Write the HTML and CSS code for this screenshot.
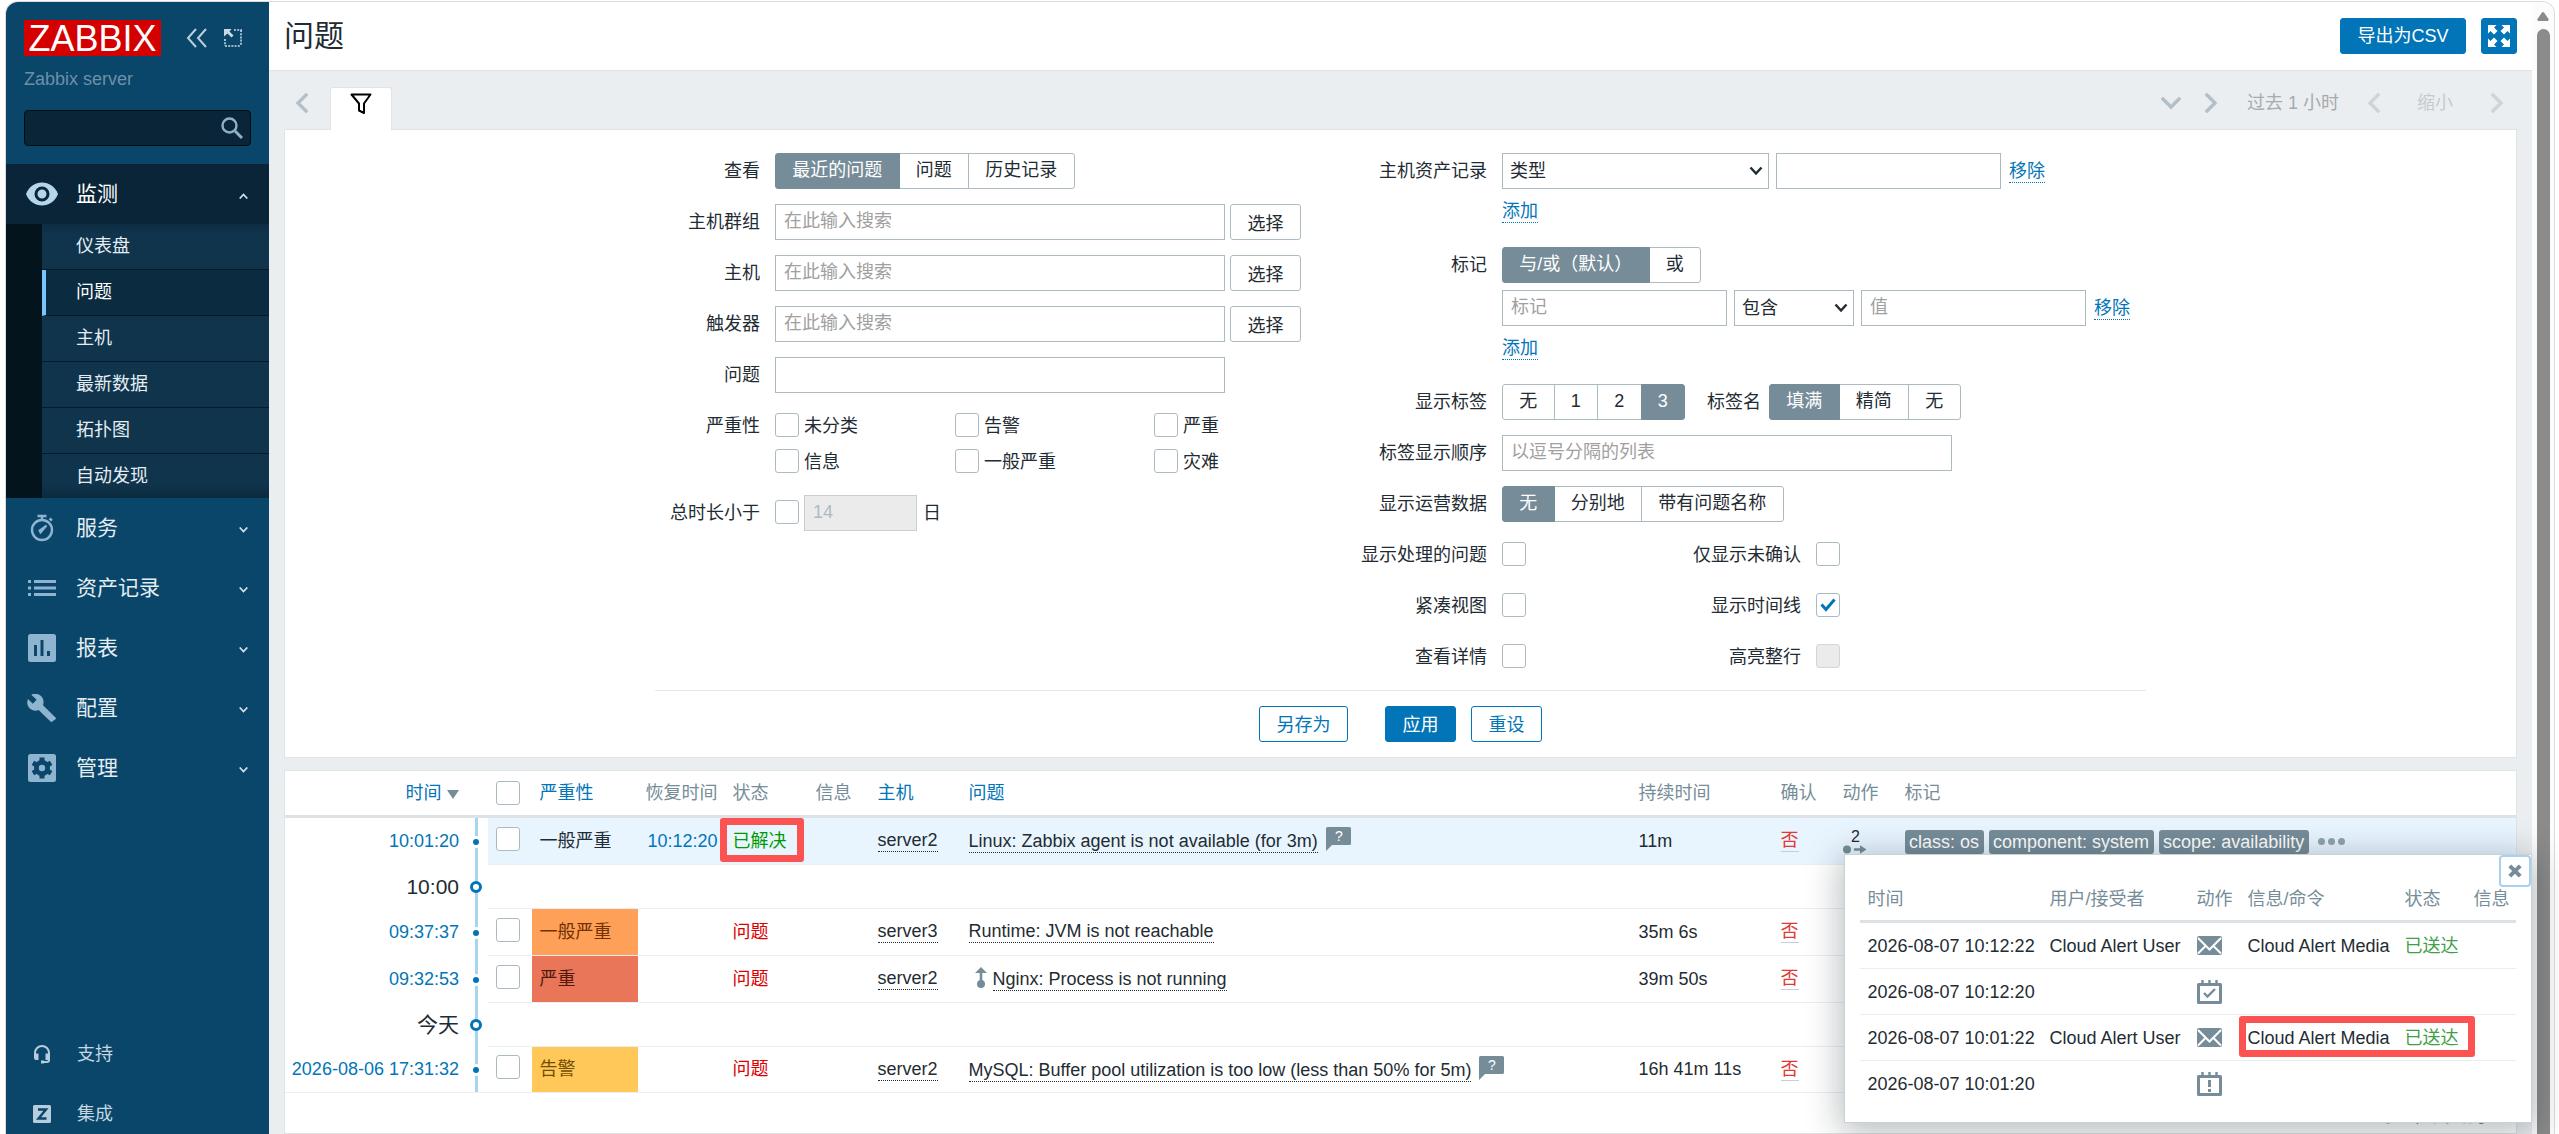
FILE: index.html
```html
<!DOCTYPE html>
<html lang="zh-CN">
<head>
    <meta charset="UTF-8">
    <meta name="viewport" content="width=device-width, initial-scale=1.0">
    <title>Zabbix server: 问题</title>
    <link rel="stylesheet" href="styles.css">
</head>
<body>
<div class="wrapper">
    <aside class="sidebar">
        <div class="sidebar-header">
            <a class="logo">ZABBIX</a>
            <svg class="icon-collapse" width="22" height="20" viewBox="0 0 22 20" fill="none" stroke="#b9cfdd" stroke-width="2"><path d="M10 1L2 10l8 9M20 1l-8 9 8 9"/></svg>
            <svg width="18" height="18" viewBox="0 0 18 18" fill="none" stroke="#c8d9e4"><path d="M10 1h8M17 1v16M1 17h16M1 10v7" stroke-width="1.6" stroke-dasharray="2 1.2"/><path d="M0 0h7.500L5.500 2.500l4 4-2 2-4-4L0 7.500z" fill="#c8d9e4" stroke="none"/></svg>
        </div>
        <div class="server-name">Zabbix server</div>
        <div class="search">
            <svg width="22" height="22" viewBox="0 0 22 22" fill="none" stroke="#8fb0c6"><circle cx="8.500" cy="8.500" r="7" stroke-width="2.400"/><path d="M14 14l7 7" stroke-width="3"/></svg>
        </div>
        <nav>
            <div class="menu-item open">
                <svg width="34" height="24" viewBox="0 0 34 24"><path d="M1 12C4 4.500 10 .5 17 .5S30 4.500 33 12c-3 7.500-9 11.500-16 11.500S4 19.500 1 12z" fill="#b5d5ea"/><circle cx="17" cy="12" r="6" fill="#b5d5ea" stroke="#0a2537" stroke-width="3"/></svg>
                <span>监测</span>
                <svg class="arrow" width="9" height="6" viewBox="0 0 9 6"><path d="M.7 5.500l3.800-4 3.800 4"/></svg>
            </div>
            <ul class="submenu">
                <li>仪表盘</li>
                <li class="selected">问题</li>
                <li>主机</li>
                <li>最新数据</li>
                <li>拓扑图</li>
                <li>自动发现</li>
            </ul>
            <div class="menu-item">
                <svg width="34" height="28" viewBox="0 0 34 28" fill="none" stroke="#8fb4cf"><circle cx="17" cy="16" r="10" stroke-width="2.400"/><path d="M12.500 2h9M17 2v4M24.500 4.500l2.500 2" stroke-width="2.400"/><path d="M15.500 18.500l6-7-7 5z" fill="#8fb4cf" stroke-width="2"/></svg>
                <span>服务</span>
                <svg class="arrow" width="9" height="6" viewBox="0 0 9 6"><path d="M.7.5l3.800 4 3.800-4"/></svg>
            </div>
            <div class="menu-item">
                <svg width="34" height="18" viewBox="0 0 34 18" fill="#8fb4cf"><path d="M3 1h3v3H3zM3 7.500h3v3H3zM3 14h3v3H3zM9 1h22v3H9zM9 7.500h22v3H9zM9 14h22v3H9z"/></svg>
                <span>资产记录</span>
                <svg class="arrow" width="9" height="6" viewBox="0 0 9 6"><path d="M.7.5l3.800 4 3.800-4"/></svg>
            </div>
            <div class="menu-item">
                <svg width="34" height="28" viewBox="0 0 34 28"><rect x="3" y="0" width="28" height="28" rx="2.500" fill="#8fb4cf"/><path d="M9 11h3v11H9zM15.500 6h3v16h-3zM22 17h3v5h-3z" fill="#0a466a"/></svg>
                <span>报表</span>
                <svg class="arrow" width="9" height="6" viewBox="0 0 9 6"><path d="M.7.5l3.800 4 3.800-4"/></svg>
            </div>
            <div class="menu-item">
                <svg width="34" height="28" viewBox="0 0 34 28"><path d="M30.500 23.500L18 11.200C19.200 8 18.500 4.500 16 2.100 13.300-.5 9.400-1 6.300.7l5.300 5.100-3.800 3.900L3 4.900C1.800 7.600 1.800 11.500 4.500 14.200c2.500 2.400 6 3.100 9.100 1.900l11.900 11.500c.5.500 1.300.5 1.800 0l3.200-2.400c.6-.5.6-1.300 0-1.700z" fill="#8fb4cf"/></svg>
                <span>配置</span>
                <svg class="arrow" width="9" height="6" viewBox="0 0 9 6"><path d="M.7.5l3.800 4 3.800-4"/></svg>
            </div>
            <div class="menu-item">
                <svg width="34" height="28" viewBox="0 0 34 28"><rect x="3" y="0" width="28" height="28" rx="2.500" fill="#8fb4cf"/><circle cx="17" cy="14" r="8" fill="#0a466a"/><path d="M17 3.500v21M7.900 8.800l18.200 10.400M7.900 19.200L26.100 8.800" stroke="#0a466a" stroke-width="5"/><circle cx="17" cy="14" r="3.200" fill="#8fb4cf"/></svg>
                <span>管理</span>
                <svg class="arrow" width="9" height="6" viewBox="0 0 9 6"><path d="M.7.5l3.800 4 3.800-4"/></svg>
            </div>
        </nav>
        <div class="sidebar-footer">
            <div class="menu-item">
                <svg width="34" height="20" viewBox="0 0 34 20"><path d="M10 12V9a7 7 0 0 1 14 0v7q0 2-2 2h-4" fill="none" stroke="#b5cddc" stroke-width="2"/><path d="M9 9.500h4.500v6.500H11q-2 0-2-2zM20.500 9.500H25v4.500q0 2-2 2h-2.500zM16 16.500h3v3h-3z" fill="#b5cddc"/></svg>
                <span>支持</span>
            </div>
            <div class="menu-item">
                <svg width="34" height="18" viewBox="0 0 34 18"><rect x="8" width="18" height="18" rx="1.500" fill="#b5cddc"/><path d="M13 4.500h8L13.500 13.500H21.500" fill="none" stroke="#0a466a" stroke-width="2.400"/></svg>
                <span>集成</span>
            </div>
        </div>
    </aside>

    <main>
        <header>
            <h1>问题</h1>
            <button class="btn">导出为CSV</button>
            <button class="btn btn-kiosk">
                <svg width="22" height="22" viewBox="0 0 22 22" fill="#fff"><path id="corner" d="M0 0h8.500L6 2.500l3.500 3.500L6 9.500l-3.500-3.500L0 8.500z"/><use href="#corner" transform="matrix(-1 0 0 1 22 0)"/><use href="#corner" transform="matrix(1 0 0 -1 0 22)"/><use href="#corner" transform="matrix(-1 0 0 -1 22 22)"/></svg>
            </button>
        </header>

        <div class="tabs-nav">
            <svg class="nav-prev" width="13" height="20" viewBox="0 0 13 20"><path d="M11 2L3 10l8 8"/></svg>
            <div class="tab">
                <svg width="22" height="22" viewBox="0 0 22 22" fill="none" stroke="#000" stroke-width="2"><path d="M1.500 1.500h19l-6.500 9v9.500l-5-2.500v-7z" stroke-linejoin="round"/></svg>
            </div>
            <div class="time-nav">
                <svg width="20" height="13" viewBox="0 0 20 13"><path d="M2 2l8 8 8-8"/></svg>
                <svg class="next" width="13" height="20" viewBox="0 0 13 20"><path d="M2 2l8 8-8 8"/></svg>
                <span class="range">过去 1 小时</span>
                <svg class="disabled" width="13" height="20" viewBox="0 0 13 20"><path d="M11 2l-8 8 8 8"/></svg>
                <span class="zoom-out">缩小</span>
                <svg class="disabled" width="13" height="20" viewBox="0 0 13 20"><path d="M2 2l8 8-8 8"/></svg>
            </div>
        </div>

        <section class="filter">
            <div class="filter-form">
                <div class="form-col form-left">
                    <div class="row">
                        <label>查看</label>
                        <div class="radio"><span class="on">最近的问题</span><span>问题</span><span>历史记录</span></div>
                    </div>
                    <div class="row">
                        <label>主机群组</label>
                        <div class="input w450">在此输入搜索</div>
                        <button class="btn-grey">选择</button>
                    </div>
                    <div class="row">
                        <label>主机</label>
                        <div class="input w450">在此输入搜索</div>
                        <button class="btn-grey">选择</button>
                    </div>
                    <div class="row">
                        <label>触发器</label>
                        <div class="input w450">在此输入搜索</div>
                        <button class="btn-grey">选择</button>
                    </div>
                    <div class="row">
                        <label>问题</label>
                        <div class="input w450"></div>
                    </div>
                    <div class="row top">
                        <label>严重性</label>
                        <div class="severities">
                            <span class="check"><i class="cb"></i>未分类</span>
                            <span class="check"><i class="cb"></i>告警</span>
                            <span class="check"><i class="cb"></i>严重</span>
                            <span class="check"><i class="cb"></i>信息</span>
                            <span class="check"><i class="cb"></i>一般严重</span>
                            <span class="check"><i class="cb"></i>灾难</span>
                        </div>
                    </div>
                    <div class="row">
                        <label>总时长小于</label>
                        <i class="cb"></i>
                        <div class="input age">14</div>
                        <span>日</span>
                    </div>
                </div>

                <div class="form-col form-right">
                    <div class="row">
                        <label>主机资产记录</label>
                        <div class="select w267">类型<svg width="14" height="10" viewBox="0 0 14 10"><path d="M1.500 1.500L7 7.500l5.500-6"/></svg></div>
                        <div class="input w225"></div>
                        <a class="link">移除</a>
                    </div>
                    <div class="row add"><label></label><a class="link">添加</a></div>
                    <div class="row">
                        <label>标记</label>
                        <div class="radio"><span class="on">与/或（默认）</span><span>或</span></div>
                    </div>
                    <div class="row tags-row">
                        <label></label>
                        <div class="input w225">标记</div>
                        <div class="select w120">包含<svg width="14" height="10" viewBox="0 0 14 10"><path d="M1.500 1.500L7 7.500l5.500-6"/></svg></div>
                        <div class="input w225">值</div>
                        <a class="link">移除</a>
                    </div>
                    <div class="row add"><label></label><a class="link">添加</a></div>
                    <div class="row">
                        <label>显示标签</label>
                        <div class="radio"><span>无</span><span>1</span><span>2</span><span class="on">3</span></div>
                        <span class="tag-name">标签名</span>
                        <div class="radio"><span class="on">填满</span><span>精简</span><span>无</span></div>
                    </div>
                    <div class="row">
                        <label>标签显示顺序</label>
                        <div class="input w450">以逗号分隔的列表</div>
                    </div>
                    <div class="row">
                        <label>显示运营数据</label>
                        <div class="radio"><span class="on">无</span><span>分别地</span><span>带有问题名称</span></div>
                    </div>
                    <div class="row">
                        <label>显示处理的问题</label><i class="cb"></i>
                        <span class="label2">仅显示未确认</span><i class="cb"></i>
                    </div>
                    <div class="row">
                        <label>紧凑视图</label><i class="cb"></i>
                        <span class="label2">显示时间线</span><i class="cb"><svg width="16" height="14" viewBox="0 0 16 14" fill="none" stroke="#0275b8" stroke-width="3"><path d="M1.500 6.500l4.500 5L14.500 1.500"/></svg></i>
                    </div>
                    <div class="row">
                        <label>查看详情</label><i class="cb"></i>
                        <span class="label2">高亮整行</span><i class="cb off"></i>
                    </div>
                </div>
            </div>
            <div class="filter-buttons">
                <button class="btn btn-alt save">另存为</button>
                <button class="btn">应用</button>
                <button class="btn btn-alt">重设</button>
            </div>
        </section>

        <section class="results">
            <table class="list">
                <colgroup>
                    <col class="c-time"><col class="c-line"><col class="c-check"><col class="c-sev"><col class="c-rec"><col class="c-status"><col class="c-info"><col class="c-host"><col class="c-problem"><col class="c-dur"><col class="c-ack"><col class="c-act"><col>
                </colgroup>
                <thead>
                    <tr>
                        <th class="right"><a>时间</a><b class="sort"></b></th>
                        <th></th>
                        <th><i class="cb"></i></th>
                        <th><a>严重性</a></th>
                        <th class="right">恢复时间</th>
                        <th>状态</th>
                        <th>信息</th>
                        <th><a>主机</a></th>
                        <th><a>问题</a></th>
                        <th>持续时间</th>
                        <th>确认</th>
                        <th>动作</th>
                        <th>标记</th>
                    </tr>
                </thead>
                <tbody>
                    <tr class="hl">
                        <td class="time">10:01:20</td>
                        <td class="line"><i class="dot"></i></td>
                        <td><i class="cb"></i></td>
                        <td>一般严重</td>
                        <td class="blue right">10:12:20</td>
                        <td class="green marked">已解决</td>
                        <td></td>
                        <td><a class="dotted">server2</a></td>
                        <td><a class="dotted low">Linux: Zabbix agent is not available (for 3m)</a><svg class="hint" width="25" height="24" viewBox="0 0 25 24"><path d="M1.500 0h22q1.500 0 1.500 1.500v15q0 1.500-1.500 1.500H6l-6 6V1.500Q0 0 1.500 0z" fill="#768d99"/><text x="13" y="14" text-anchor="middle">?</text></svg></td>
                        <td>11m</td>
                        <td><a class="ack">否</a></td>
                        <td><div class="actions"><span>2</span><svg width="24" height="9" viewBox="0 0 24 9" fill="#768d99"><circle cx="4" cy="4.500" r="4"/><path d="M11 3.200h6V.3l6.500 4.200L17 8.700V5.800h-6z"/></svg></div></td>
                        <td><div class="tags"><span>class: os</span><span>component: system</span><span>scope: availability</span><b></b><b></b><b></b></div></td>
                    </tr>
                    <tr class="group">
                        <td class="time">10:00</td>
                        <td class="line"><i class="ring"></i></td>
                        <td colspan="11"></td>
                    </tr>
                    <tr>
                        <td class="time">09:37:37</td>
                        <td class="line"><i class="dot"></i></td>
                        <td><i class="cb"></i></td>
                        <td class="average">一般严重</td>
                        <td></td>
                        <td class="red">问题</td>
                        <td></td>
                        <td><a class="dotted">server3</a></td>
                        <td><a class="dotted">Runtime: JVM is not reachable</a></td>
                        <td>35m 6s</td>
                        <td><a class="ack">否</a></td>
                        <td></td>
                        <td></td>
                    </tr>
                    <tr>
                        <td class="time">09:32:53</td>
                        <td class="line"><i class="dot"></i></td>
                        <td><i class="cb"></i></td>
                        <td class="high">严重</td>
                        <td></td>
                        <td class="red">问题</td>
                        <td></td>
                        <td><a class="dotted">server2</a></td>
                        <td><svg class="depend" width="12" height="21" viewBox="0 0 12 21" fill="#768d99"><path d="M6 0l6 6H7.300v8H4.700V6H0z"/><circle cx="6" cy="17" r="4"/></svg><a class="dotted low">Nginx: Process is not running</a></td>
                        <td>39m 50s</td>
                        <td><a class="ack">否</a></td>
                        <td></td>
                        <td></td>
                    </tr>
                    <tr class="group">
                        <td class="time">今天</td>
                        <td class="line"><i class="ring"></i></td>
                        <td colspan="11"></td>
                    </tr>
                    <tr class="last">
                        <td class="time">2026-08-06 17:31:32</td>
                        <td class="line"><i class="dot"></i></td>
                        <td><i class="cb"></i></td>
                        <td class="warning">告警</td>
                        <td></td>
                        <td class="red">问题</td>
                        <td></td>
                        <td><a class="dotted">server2</a></td>
                        <td><a class="dotted low">MySQL: Buffer pool utilization is too low (less than 50% for 5m)</a><svg class="hint" width="25" height="24" viewBox="0 0 25 24"><path d="M1.500 0h22q1.500 0 1.500 1.500v15q0 1.500-1.500 1.500H6l-6 6V1.500Q0 0 1.500 0z" fill="#768d99"/><text x="13" y="14" text-anchor="middle">?</text></svg></td>
                        <td>16h 41m 11s</td>
                        <td><a class="ack">否</a></td>
                        <td></td>
                        <td></td>
                    </tr>
                </tbody>
            </table>
            <div class="table-stats">显示 4，找到的 4</div>
        </section>
    </main>

    <div class="scrollbar">
        <svg width="12" height="9" viewBox="0 0 12 9"><path d="M6 0q.8 0 1.400.9L11.500 7q.6 1.500-1 2h-9Q-.1 8.500.5 7L4.600.9Q5.200 0 6 0z" fill="#8b8b8b"/></svg>
        <div class="thumb"></div>
    </div>
</div>

<!-- action log popup -->
<div class="popup">
    <button class="close"><svg width="14" height="14" viewBox="0 0 14 14" stroke="#768d99" stroke-width="4"><path d="M1.800 1.800l10.400 10.400M12.200 1.800L1.800 12.200"/></svg></button>
    <table>
        <colgroup><col class="p-time"><col class="p-user"><col class="p-act"><col class="p-msg"><col class="p-status"><col></colgroup>
        <thead>
            <tr><th>时间</th><th>用户/接受者</th><th>动作</th><th>信息/命令</th><th>状态</th><th>信息</th></tr>
        </thead>
        <tbody>
            <tr>
                <td>2026-08-07 10:12:22</td>
                <td>Cloud Alert User</td>
                <td><svg width="25" height="19" viewBox="0 0 25 19"><rect width="25" height="19" rx="2" fill="#768d99"/><path d="M1 2l11.500 11.500L24 2M1 17.500l8-8M24 17.500l-8-8" fill="none" stroke="#fff" stroke-width="2"/></svg></td>
                <td>Cloud Alert Media</td>
                <td class="sent">已送达</td>
                <td></td>
            </tr>
            <tr>
                <td>2026-08-07 10:12:20</td>
                <td></td>
                <td><svg width="25" height="24" viewBox="0 0 25 24" fill="none" stroke="#768d99"><path d="M1.500 4.500h22v18h-22z" stroke-width="3" stroke-linejoin="round"/><path d="M5.500 0v4M12.500 0v4M19.500 0v4M7 13l3.500 3.500L18 9" stroke-width="2.400"/></svg></td>
                <td></td>
                <td></td>
                <td></td>
            </tr>
            <tr>
                <td>2026-08-07 10:01:22</td>
                <td>Cloud Alert User</td>
                <td><svg width="25" height="19" viewBox="0 0 25 19"><rect width="25" height="19" rx="2" fill="#768d99"/><path d="M1 2l11.500 11.500L24 2M1 17.500l8-8M24 17.500l-8-8" fill="none" stroke="#fff" stroke-width="2"/></svg></td>
                <td class="marked">Cloud Alert Media</td>
                <td class="sent">已送达</td>
                <td></td>
            </tr>
            <tr>
                <td>2026-08-07 10:01:20</td>
                <td></td>
                <td><svg width="25" height="24" viewBox="0 0 25 24" fill="none" stroke="#768d99"><path d="M1.500 4.500h22v18h-22z" stroke-width="3" stroke-linejoin="round"/><path d="M5.500 0v4M12.500 0v4M19.500 0v4" stroke-width="2.400"/><path d="M12.500 8v7M12.500 17v3" stroke-width="3"/></svg></td>
                <td></td>
                <td></td>
                <td></td>
            </tr>
        </tbody>
    </table>
</div>
</body>
</html>
```

FILE: styles.css
```css
*,
*::after {
    box-sizing: border-box;
}
body {
    margin: 0;
    height: 1134px;
    overflow: hidden;
    background: #fff;
    color: #1f2c33;
    font-family: "Liberation Sans", Arial, "Noto Sans CJK SC", sans-serif;
    font-size: 18px;
    line-height: 22px;
}
svg {
    display: block;
    flex: none;
}
button {
    font: inherit;
    padding: 0;
    margin: 0;
}
.wrapper {
    display: flex;
    height: 1133px;
    margin: 1px 4px 0 5px;
    border: 1px solid #dcdcdc;
    border-bottom: 0;
    border-radius: 13px 13px 0 0;
    overflow: hidden;
}

/* sidebar */
.sidebar {
    display: flex;
    flex-direction: column;
    width: 263px;
    flex: none;
    background: #0a466a;
    color: #e4edf3;
}
.sidebar-header {
    display: flex;
    align-items: center;
    height: 36px;
    margin: 18px 0 0 18px;
}
.logo {
    width: 137px;
    height: 36px;
    background: #d40000;
    color: #fff;
    font-size: 36px;
    line-height: 37px;
    text-align: center;
}
.icon-collapse {
    margin: 0 16px 0 25px;
}
.server-name {
    margin: 10px 0 0 18px;
    height: 26px;
    line-height: 26px;
    color: #6c90a7;
}
.search {
    display: flex;
    align-items: center;
    justify-content: flex-end;
    width: 227px;
    height: 36px;
    margin: 18px 0 18px 18px;
    padding-right: 7px;
    background: #0a2537;
    border: 1px solid #000d17;
    border-radius: 4px;
}
.menu-item {
    display: flex;
    align-items: center;
    height: 60px;
    padding: 0 21px 0 19px;
    font-size: 21px;
}
.menu-item span {
    flex: 1;
    margin: 0 0 1px 17px;
}
.menu-item.open {
    background: #0a2537;
    color: #fff;
}
.arrow path {
    fill: none;
    stroke: #d5e2ea;
    stroke-width: 1.7;
}
.arrow {
    margin-top: 4px;
}
.submenu {
    list-style: none;
    margin: 0;
    padding: 0;
    border-left: 36px solid #04141d;
}
.submenu li {
    height: 46px;
    line-height: 44px;
    padding-left: 34px;
    background: #0f344c;
    border-bottom: 1px solid #041b29;
}
.submenu li:first-child {
    background: linear-gradient(#0d2d42, #0f344c 10px);
}
.submenu li:last-child {
    height: 44px;
    border-bottom: 0;
    background: linear-gradient(#0f344c 30px, #0c2a3e);
}
.submenu .selected {
    padding-left: 30px;
    background: #0b2c40;
    border-left: 4px solid #79c4fb;
    color: #fff;
}
.sidebar-footer {
    margin-top: auto;
    margin-bottom: -10px;
}
.sidebar-footer .menu-item {
    font-size: 18px;
    color: #c5d7e2;
}
.sidebar-footer span {
    margin-bottom: 0;
    margin-left: 18px;
}

/* page header */
main {
    flex: 1;
    display: flex;
    flex-direction: column;
    background: #ebeef0;
}
header {
    display: flex;
    flex: none;
    align-items: center;
    height: 69px;
    padding: 0 15px 0 15px;
    background: #fff;
    border-bottom: 1px solid #dfe4e7;
}
h1 {
    flex: 1;
    margin: 0;
    font-size: 30px;
    font-weight: normal;
    line-height: 36px;
}
.btn {
    height: 36px;
    padding: 0 16.500px;
    background: #0275b8;
    border: 1px solid #0275b8;
    border-radius: 3px;
    color: #fff;
}
header .btn {
    margin-left: 15px;
}
header .btn-kiosk {
    display: flex;
    align-items: center;
    justify-content: center;
    width: 36px;
    padding: 0;
}
.btn-alt {
    background: #fff;
    color: #0275b8;
}

/* tabs and time selector */
.tabs-nav {
    display: flex;
    flex: none;
    align-items: center;
    height: 58px;
    padding: 6px 13px 0 26px;
}
.tabs-nav path {
    stroke-linecap: square;
}
.nav-prev path,
.time-nav path {
    fill: none;
    stroke: #b3c0c8;
    stroke-width: 3.4;
}
.tab {
    display: flex;
    justify-content: center;
    position: relative;
    align-self: flex-end;
    width: 62px;
    height: 43px;
    margin: 0 0 -1px 22px;
    padding-top: 5px;
    background: #fff;
    border: 1px solid #dfe4e7;
    border-bottom: 0;
    border-radius: 3px 3px 0 0;
}
.time-nav {
    display: flex;
    align-items: center;
    margin-left: auto;
    margin-right: 15px;
}
.time-nav .next {
    margin: 0 29px 0 24px;
}
.time-nav .disabled path {
    stroke: #cdd5da;
}
.range {
    width: 120px;
    color: #a5abae;
}
.zoom-out {
    margin: 0 38px 0 37px;
    color: #c2cbd0;
}

/* filter */
.filter {
    flex: none;
    height: 629px;
    margin: 0 15px 0 15px;
    padding-top: 23px;
    background: #fff;
    border: 1px solid #dfe4e7;
}
.filter-form {
    display: flex;
    width: 1491px;
    height: 538px;
    margin: 0 auto;
    border-bottom: 1px solid #e5e9eb;
}
.form-left {
    width: 685px;
}
.row {
    display: flex;
    align-items: center;
    height: 36px;
    margin-bottom: 15px;
}
.row label {
    flex: none;
    width: 105px;
    margin-right: 15px;
    text-align: right;
    white-space: nowrap;
}
.form-right label {
    width: 147px;
}
.row.top {
    height: 72px;
    align-items: flex-start;
}
.row.top label {
    line-height: 36px;
}
.row.add {
    height: 43px;
    margin: -15px 0 15px;
    padding-top: 1px;
}
.row.tags-row {
    margin-top: -8px;
}
.radio {
    display: flex;
}
.radio span {
    height: 36px;
    padding: 0 16.25px;
    margin-left: -1px;
    border: 1px solid #acbbc2;
    line-height: 32px;
    white-space: nowrap;
}
.radio span:first-child {
    margin-left: 0;
    border-radius: 3px 0 0 3px;
}
.radio span:last-child {
    border-radius: 0 3px 3px 0;
}
.radio .on {
    position: relative;
    background: #768d99;
    border-color: #768d99;
    color: #fff;
}
.input,
.select {
    height: 36px;
    padding: 0 8px;
    border: 1px solid #acbbc2;
    background: #fff;
    color: #a0a0a0;
    line-height: 32px;
}
.select {
    display: flex;
    align-items: center;
    justify-content: space-between;
    margin-right: 7px;
    padding: 0 5px 0 7px;
    color: #1f2c33;
    line-height: 36px;
}
.select path {
    fill: none;
    stroke: #1f2c33;
    stroke-width: 2.4;
}
.select + .input {
    margin-right: 8px;
}
.tags-row label + .input {
    margin-right: 7px;
}
.w450 { width: 450px; }
.w267 { width: 267px; }
.w225 { width: 225px; }
.w120 { width: 120px; }
.btn-grey {
    width: 71px;
    height: 36px;
    margin-left: 5px;
    padding-top: 3px;
    background: #fff;
    border: 1px solid #acbbc2;
    border-radius: 3px;
    color: #1f2c33;
}
.link {
    color: #0275b8;
    line-height: 22px;
    border-bottom: 1px dotted #0275b8;
}
.cb {
    display: flex;
    align-items: center;
    justify-content: center;
    flex: none;
    width: 24px;
    height: 24px;
    background: #fff;
    border: 1px solid #acbbc2;
    border-radius: 3px;
}
.row .cb {
    margin-bottom: 3px;
}
.cb.off {
    background: #ebebeb;
    border-color: #d0d8dc;
}
.severities {
    display: grid;
    grid-template-columns: 180px 199px auto;
    grid-auto-rows: 36px;
}
.check {
    display: flex;
    align-items: center;
}
.check .cb {
    margin-right: 5px;
}
.age {
    width: 113px;
    margin: 0 6px 0 5px;
    background: #ebebeb;
    border-color: #c4d0d6;
    color: #acbbc2;
}
.tag-name {
    margin: 0 8px 0 22px;
}
.label2 {
    width: 275px;
    margin-right: 15px;
    text-align: right;
}
.filter-buttons {
    display: flex;
    justify-content: center;
    gap: 15px;
    margin-top: 15px;
}
.filter-buttons .btn {
    padding-top: 2px;
}
.save {
    margin-right: 22px;
}

/* problem list */
.results {
    flex: 1;
    margin: 12px 15px 0;
    background: #fff;
    border: 1px solid #dfe4e7;
}
table {
    width: 100%;
    table-layout: fixed;
    border-spacing: 0;
}
.c-time { width: 181px; }
.c-line { width: 22px; }
.c-check { width: 44px; }
.c-sev { width: 106px; }
.c-rec { width: 87px; }
.c-status { width: 83px; }
.c-info { width: 62px; }
.c-host { width: 91px; }
.c-problem { width: 670px; }
.c-dur { width: 142px; }
.c-ack { width: 62px; }
.c-act { width: 62px; }
th,
td {
    padding: 0 7.500px;
    text-align: left;
    font-weight: normal;
    white-space: nowrap;
    border-bottom: 1px solid #ebeef0;
}
th {
    height: 47px;
    color: #768d99;
    border-bottom: 3px solid #dce2e5;
}
td {
    height: 47px;
}
.list td {
    padding-bottom: 1px;
}
th a,
.blue {
    color: #0275b8;
}
.right {
    text-align: right;
}
.sort {
    display: inline-block;
    margin-left: 5px;
    border: 6px solid transparent;
    border-top: 9px solid #768d99;
    border-bottom: 0;
}
.list td.time {
    padding: 0 7px 1px 0;
    text-align: right;
    color: #0275b8;
    border-bottom: 0;
}
.list .group td {
    height: 44px;
}
.list .group .time {
    color: #1f2c33;
    font-size: 21px;
}
.list .line {
    padding: 0;
    border-bottom: 0;
    background: linear-gradient(#a8d4ec, #a8d4ec) 9px 0 / 3px 100% no-repeat;
}
.list .last td,
.list .last .time,
.list .last .line {
    height: 46px;
    border-bottom: 1px solid #ebeef0;
}
.dot {
    display: block;
    width: 6px;
    height: 6px;
    margin: 0 0 0 7px;
    border-radius: 50%;
    background: #0275b8;
    box-shadow: 0 0 0 3px #fff;
}
.ring {
    display: block;
    width: 12px;
    height: 12px;
    margin-left: 4px;
    border: 3.500px solid #0275b8;
    border-radius: 50%;
    background: #fff;
}
.hl td:nth-child(n+3) {
    background: #e8f5ff;
}
.list td .cb {
    margin-bottom: 4px;
}
.average { background: #ffa059; color: #733100; }
.high { background: #e97659; color: #52190b; }
.warning { background: #ffc859; color: #734d00; }
.green { color: #009900; }
.red { color: #dc0000; }
.dotted {
    display: inline-block;
    line-height: 21px;
    border-bottom: 1px dotted #1f2c33;
}
.dotted.low {
    position: relative;
    top: 1px;
}
.hint {
    display: inline-block;
    vertical-align: middle;
    margin: -4px 0 0 8px;
}
.hint text {
    fill: #fff;
    font-size: 14px;
}
.depend {
    display: inline-block;
    vertical-align: middle;
    margin: -3px 6px 0 6px;
}
.ack {
    display: inline-block;
    line-height: 21px;
    color: #e33734;
    border-bottom: 1px solid #c5cfd4;
}
.actions {
    width: 26px;
    padding-top: 1px;
    text-align: center;
    font-size: 16px;
    line-height: 16px;
}
.tags {
    display: flex;
    align-items: center;
    gap: 5px;
    margin-top: 2px;
}
.tags span {
    height: 24px;
    padding: 0 4.500px;
    line-height: 24px;
    background: #768d99;
    border-radius: 3px;
    color: #fff;
}
.tags b {
    width: 7px;
    height: 7px;
    margin-right: -3px;
    margin-left: 1px;
    background: #90a4ae;
    border-radius: 50%;
}
.tags span + b {
    margin-left: 4px;
}
.table-stats {
    height: 40px;
    padding-right: 15px;
    line-height: 47px;
    text-align: right;
    color: #768d99;
}

/* red frames around the delivered notification */
.marked {
    position: relative;
}
.marked::after {
    content: "";
    position: absolute;
    border: 7px solid #fb5252;
    border-radius: 3px;
}
.list .marked::after {
    left: -5px;
    top: 0;
    width: 84px;
    height: 44px;
}
.popup .marked::after {
    left: -1px;
    top: 1px;
    width: 236px;
    height: 41px;
}

/* scrollbar */
.scrollbar {
    display: flex;
    flex-direction: column;
    align-items: center;
    width: 22px;
    padding-top: 10px;
    background: #fcfcfc;
}
.thumb {
    flex: 1;
    width: 13px;
    margin-top: 8px;
    background: #8b8b8b;
    border-radius: 7px 7px 0 0;
}

/* popup */
.popup {
    position: absolute;
    left: 1844px;
    top: 854px;
    width: 688px;
    height: 269px;
    padding: 21px 15px 0;
    background: #fff;
    border: 1px solid #c7d2d8;
    box-shadow: 0 6px 32px 4px rgba(0, 20, 30, .28);
}
.close {
    position: absolute;
    top: 0;
    right: 0;
    display: flex;
    align-items: center;
    justify-content: center;
    width: 32px;
    height: 32px;
    background: #fff;
    border: 2px solid #a8d0f0;
    border-radius: 4px;
}
.p-time { width: 182px; }
.p-user { width: 147px; }
.p-act { width: 51px; }
.p-msg { width: 157px; }
.p-status { width: 69px; }
.popup th {
    padding-top: 2px;
}
.popup td {
    height: 46px;
}
.popup tr:last-child td {
    border-bottom: 0;
}
.popup .sent {
    color: #429e47;
}
```
